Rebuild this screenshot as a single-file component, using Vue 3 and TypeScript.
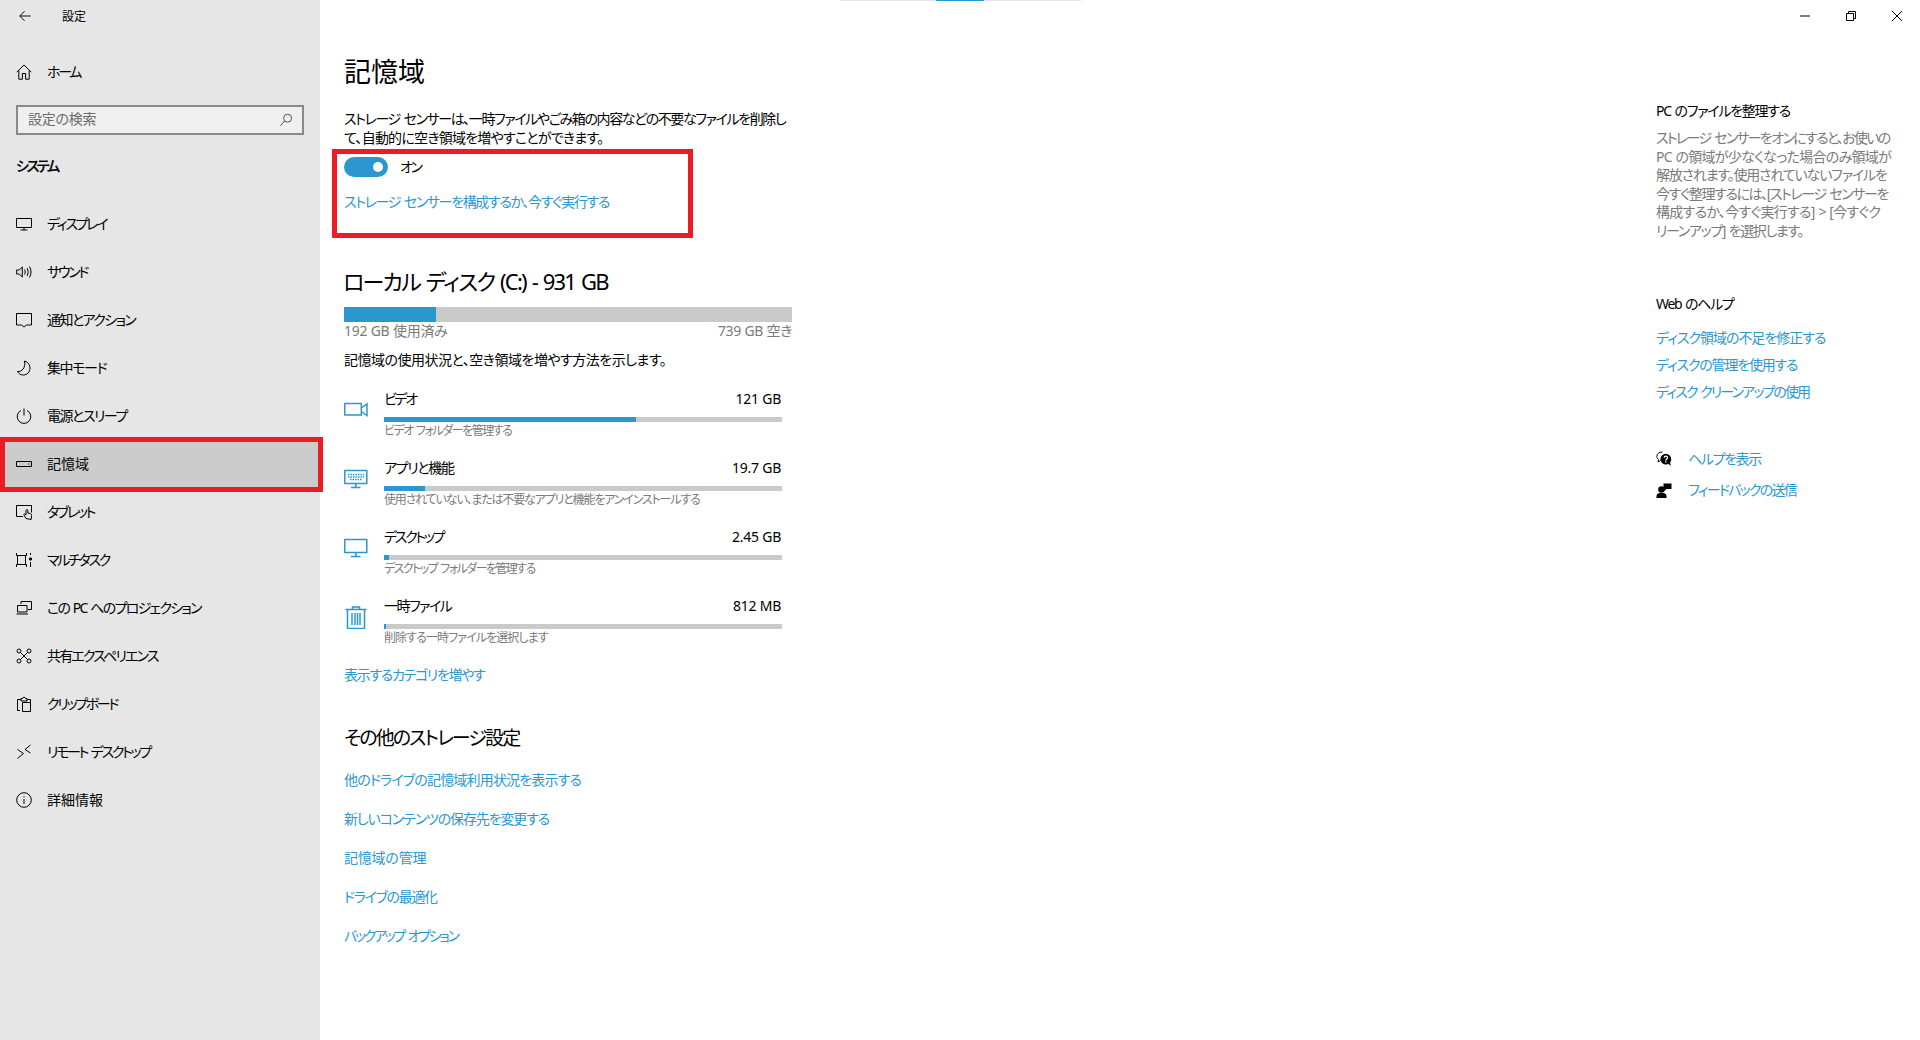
<template>
  <div class="window">
    <aside class="sidebar">
      <div class="titlebar">
        <svg class="back" viewBox="0 0 16 16"><path d="M14.5 8H2M7.5 2.5 2 8l5.5 5.5" /></svg>
        <span>設定</span>
      </div>
      <div class="nav-row home">
        <svg class="nav-icon" viewBox="0 0 16 16"><path d="M.8 8 8 1l7.2 7M2.8 6.5v8.7h3.6V9.5h3.2v5.7h3.6V6.5" /></svg>
        <span v-tight>ホーム</span>
      </div>
      <div class="search">
        <span v-tight>設定の検索</span>
        <svg viewBox="0 0 14 14"><circle cx="8.6" cy="5.2" r="4" /><path d="M5.8 8 1.2 12.8" /></svg>
      </div>
      <div class="group-title" v-tight>システム</div>
      <nav>
        <div v-for="item in navItems" :key="item.label" class="nav-row" :class="{ selected: item.label === '記憶域' }">
          <svg class="nav-icon" viewBox="0 0 16 16" v-html="item.icon"></svg>
          <span v-tight>{{ item.label }}</span>
        </div>
      </nav>
    </aside>

    <main class="content">
      <section class="storage">
        <h1>記憶域</h1>
        <p class="desc">
          <span v-for="line in descLines" :key="line" v-tight>{{ line }}</span>
        </p>

        <div class="sense-box">
          <div class="toggle-line">
            <span class="toggle"><i></i></span>
            <span v-tight>オン</span>
          </div>
          <a class="link sense-link" v-tight>ストレージ センサーを構成するか、今すぐ実行する</a>
        </div>

        <h2 v-tight>ローカル ディスク (C:) - 931 GB</h2>
        <div class="disk-bar"><div class="disk-fill"></div></div>
        <div class="disk-labels">
          <span v-tight>192 GB 使用済み</span>
          <span v-tight>739 GB 空き</span>
        </div>
        <p class="usage-note" v-tight>記憶域の使用状況と、空き領域を増やす方法を示します。</p>

        <div class="categories">
          <div v-for="c in categories" :key="c.name" class="category">
            <svg class="cat-icon" viewBox="0 0 24 24" v-html="c.icon"></svg>
            <div class="cat-body">
              <div class="cat-head">
                <span v-tight>{{ c.name }}</span>
                <span v-tight>{{ c.size }}</span>
              </div>
              <div class="cat-bar"><div class="cat-fill" :style="{ width: c.fill + 'px' }"></div></div>
              <div class="cat-sub" v-tight>{{ c.sub }}</div>
            </div>
          </div>
        </div>
        <a class="link more" v-tight>表示するカテゴリを増やす</a>

        <h3 v-tight>その他のストレージ設定</h3>
        <div class="other-links">
          <a v-for="l in otherLinks" :key="l" class="link" v-tight>{{ l }}</a>
        </div>
      </section>

      <aside class="help">
        <div class="help-title" v-tight>PC のファイルを整理する</div>
        <p class="help-text">
          <span v-for="line in helpLines" :key="line" v-tight>{{ line }}</span>
        </p>
        <div class="help-title web" v-tight>Web のヘルプ</div>
        <div class="help-links">
          <a class="link" v-tight>ディスク領域の不足を修正する</a>
          <a class="link" v-tight>ディスクの管理を使用する</a>
          <a class="link" v-tight>ディスク クリーンアップの使用</a>
        </div>
        <div class="help-actions">
          <div class="action">
            <svg viewBox="0 0 16 16">
              <path class="thin" d="M6.5 1C3.2 1 .8 3 .8 5.4c0 1.3.7 2.4 1.8 3.2L2 11l2.6-1.5" />
              <circle cx="9.8" cy="8.2" r="5.4" fill="#000" />
              <path class="solid" d="m12 12.5 2.8 2.5-.6-3.5z" />
              <path class="mark" d="M8.2 6.8c0-2.2 3.3-2.2 3.3-.1 0 1.3-1.7 1.3-1.7 2.7M9.8 10.3v1.100" />
            </svg>
            <a class="link" v-tight>ヘルプを表示</a>
          </div>
          <div class="action">
            <svg viewBox="0 0 16 16">
              <circle cx="5.5" cy="7.500" r="3.3" fill="#000" />
              <path class="solid" d="M.5 16v-1.800c0-2 1.700-3.200 3.500-3.200h3c1.800 0 3.500 1.200 3.500 3.200V16z" />
              <path class="solid" d="M7.500 1.500h8v5.500h-5L8.600 9V7h-1.100z" />
            </svg>
            <a class="link" v-tight>フィードバックの送信</a>
          </div>
        </div>
      </aside>
    </main>

    <div class="top-strip"><i></i></div>
    <div class="controls">
      <svg viewBox="0 0 10 10"><path d="M0 5h10" /></svg>
      <svg viewBox="0 0 10 10"><path d="M.5 2.500h7v7h-7zM2.500 2.500V.5h7v7H7.500" /></svg>
      <svg viewBox="0 0 10 10"><path d="m0 0 10 10M10 0 0 10" /></svg>
    </div>
  </div>
</template>

<script setup lang="ts">
import type { Directive } from 'vue'

// kana in the original UI font is narrower than in Noto, so pull each text in by its kana count
const vTight: Directive<HTMLElement> = {
  mounted(el) {
    const text = el.textContent || ''
    const scale = parseFloat(getComputedStyle(el).fontSize) / 14
    const kata = (text.match(/[\u30A0-\u30FF]/g) || []).length
    const hira = (text.match(/[\u3040-\u309F]/g) || []).length
    const latin = (text.match(/[A-Za-z0-9.]/g) || []).length
    const spaces = (text.match(/ /g) || []).length
    const cut = (kata * 2.3 + hira * 1.3 + latin * 0.3) * scale
    const each = cut / (text.length - spaces)
    el.style.letterSpacing = (-each).toFixed(3) + 'px'
    el.style.wordSpacing = each.toFixed(3) + 'px'
  },
}

const descLines = [
  'ストレージ センサーは、一時ファイルやごみ箱の内容などの不要なファイルを削除し',
  'て、自動的に空き領域を増やすことができます。',
]

const helpLines = [
  'ストレージ センサーをオンにすると、お使いの',
  'PC の領域が少なくなった場合のみ領域が',
  '解放されます。使用されていないファイルを',
  '今すぐ整理するには、[ストレージ センサーを',
  '構成するか、今すぐ実行する] > [今すぐク',
  'リーンアップ] を選択します。',
]

const navItems = [
  { label: 'ディスプレイ', icon: '<path d="M.5 2.500h15v9H.5zM8 11.500v2.500M4.500 14h7" />' },
  { label: 'サウンド', icon: '<path d="M.7 6h2.500L6.300 3v10L3.200 10H.7zM8.500 5.500c.9 1.600.9 3.400 0 5M11 4c1.500 2.500 1.500 5.500 0 8M13.500 2.500c2 3.500 2 7.500 0 11" />' },
  { label: '通知とアクション', icon: '<path d="M.5 1.500h15v11.500h-5L8 15l-2.500-2H.5z" />' },
  { label: '集中モード', icon: '<path d="M8.500 1c3.500 1 5.500 3.800 5.500 7 0 4-3 7-6.500 7C4.500 15 2.500 13.500 1.500 11.500c4 .5 8.500-3.500 7-10.500z" />' },
  { label: '電源とスリープ', icon: '<path d="M5 2.500a6.800 6.800 0 1 0 6 0M8 .5v7" />' },
  { label: '記憶域', icon: '<path d="M.5 5.500h15v5H.5zM12.500 8h1" />' },
  { label: 'タブレット', icon: '<path d="M7 12.500H.5v-11h15v7M10 14.500 8 11c-.5-1 .7-1.500 1.300-.8l.7.8V6.500c0-1.200 1.800-1.200 1.800 0V9l2.500.6c1 .2 1.300 1 1.200 2l-.3 3.900z" />' },
  { label: 'マルチタスク', icon: '<path d="M.5 1v2.500h10V1M.5 15v-2.500h10V15M1.500 3.500v9M9.500 3.500v9M14.500 1v2M14.500 10v5" /><circle cx="14.500" cy="7" r="1.200" fill="#000" />' },
  { label: 'この PC へのプロジェクション', icon: '<path d="M5 4V1.500h10.500v8H12M1.500 5.500H11v6.500H1.500zM.5 14h11.500" />' },
  { label: '共有エクスペリエンス', icon: '<circle cx="3" cy="3" r="2" /><circle cx="13" cy="3" r="2" /><circle cx="3" cy="13" r="2" /><circle cx="13" cy="13" r="2" /><path d="m4.500 4.500 7 7M11.500 4.500l-7 7" />' },
  { label: 'クリップボード', icon: '<path d="M4 14.500H1.500V3.500H5M11 3.500h3.500v2.500M5 5V2.500h1.500C6.500 .8 9.500 .8 9.500 2.500H11V5zM6.500 6.500h8v9h-8z" />' },
  { label: 'リモート デスクトップ', icon: '<path d="m1.500 5.500 6 4-6 5M14.500 1 9 5.500l5.500 3.500" />' },
  { label: '詳細情報', icon: '<circle cx="8" cy="8" r="7.300" /><path d="M8 7v5M8 4.200v1.200" />' },
]

const categories = [
  { name: 'ビデオ', size: '121 GB', sub: 'ビデオ フォルダーを管理する', fill: 252, icon: '<path d="M.8 5.500h16.500v11.500H.8zM17.300 10l5.700-4v11.500L17.300 13.500" />' },
  { name: 'アプリと機能', size: '19.7 GB', sub: '使用されていない、または不要なアプリと機能をアンインストールする', fill: 41, icon: '<path d="M.8 3.500h22v13H.8zM11.800 16.500v3.500M7 20.500h9.500" /><path stroke-dasharray="1.500 1" d="M4 7.500h16M4 10h16M6 12.500h12" />' },
  { name: 'デスクトップ', size: '2.45 GB', sub: 'デスクトップ フォルダーを管理する', fill: 5, icon: '<path d="M.8 3.500h22v13H.8zM11.800 16.500v3.500M7 20.500h9.500" />' },
  { name: '一時ファイル', size: '812 MB', sub: '削除する一時ファイルを選択します', fill: 2, icon: '<path d="M1.500 4.500h21M8.500 4.500V2h7v2.500M3.500 4.500v19h17v-19M8 8v12M11 8v12M13.500 8v12M16 8v12" />' },
]

const otherLinks = [
  '他のドライブの記憶域利用状況を表示する',
  '新しいコンテンツの保存先を変更する',
  '記憶域の管理',
  'ドライブの最適化',
  'バックアップ オプション',
]
</script>

<style>
html, body { margin: 0; background: #fff; }
</style>

<style scoped>
.window {
  position: relative; display: flex; height: 1040px; overflow: hidden; background: #fff; color: #000;
  font-family: "Noto Sans", "Noto Sans CJK JP", sans-serif; font-size: 14px; line-height: 20px;
  font-feature-settings: "palt";
}
.sidebar { flex: 0 0 320px; background: #e6e6e6; }
.titlebar { display: flex; align-items: center; height: 32px; margin-bottom: 16px; font-size: 12px; }
.titlebar span { padding-top: 2px; }
.titlebar .back { width: 14px; height: 14px; margin: 0 30px 0 18px; fill: none; stroke: #000; stroke-width: 1.1; }
.home { margin-bottom: 9px; }
.nav-row { position: relative; display: flex; align-items: center; height: 48px; padding-left: 16px; }
.nav-icon { flex: none; width: 16px; height: 16px; margin-right: 15px; fill: none; stroke: #000; stroke-width: 1; }
.search {
  display: flex; align-items: center; justify-content: space-between; box-sizing: border-box;
  width: 288px; height: 30px; margin-left: 16px; padding: 0 9px 0 10px;
  border: 2px solid #8a8a8a; background: #f0f0f0; color: #6b6b6b;
}
.search span { padding-bottom: 2px; }
.search svg { width: 14px; height: 14px; fill: none; stroke: #555; stroke-width: 1; }
.group-title { margin: 21px 0 24px 16px; font-weight: 500; -webkit-text-stroke: 0.2px #000; }
.selected { background: #cccccc; }
.selected::after {
  content: ""; position: absolute; left: 0; top: -3px; width: 323px; height: 55px;
  box-sizing: border-box; border: 5px solid #ed1c24;
}
.content { flex: 1; min-width: 0; display: flex; justify-content: space-between; padding-left: 24px; }
.storage { width: 448px; }
h1 { margin: 54px 0 0; font-size: 27px; line-height: 36px; font-weight: 400; }
.desc { margin: 19px 0 0; line-height: 19px; white-space: nowrap; }
.desc span, .help-text span { display: block; }
.sense-box {
  box-sizing: border-box; width: 361px; height: 89px; margin: 2px 0 0 -12px;
  padding: 3px 0 0 7px; border: 5px solid #ed1c24;
}
.toggle-line { display: flex; align-items: center; gap: 12px; height: 20px; }
.toggle { position: relative; display: block; width: 44px; height: 20px; border-radius: 10px; background: #2b97cf; }
.toggle i { position: absolute; right: 5px; top: 5px; width: 10px; height: 10px; border-radius: 50%; background: #fff; }
.link { display: block; color: #2b97cf; white-space: nowrap; }
.sense-link { margin-top: 15px; }
h2 { margin: 28px 0 0 -1px; font-size: 22px; line-height: 30px; font-weight: 400; }
.disk-bar { height: 15px; margin-top: 11px; background: #cacaca; }
.disk-fill { width: 92px; height: 100%; background: #2b97cf; }
.disk-labels { display: flex; justify-content: space-between; line-height: 18px; color: #7a7a7a; }
.usage-note { margin: 10px 0 0; }
.categories { display: flex; flex-direction: column; gap: 18px; margin-top: 19px; }
.category { display: flex; }
.cat-icon { flex: none; width: 24px; height: 24px; margin: 9px 16px 0 0; fill: none; stroke: #2b97cf; stroke-width: 1.5; }
.cat-body { width: 398px; }
.cat-head { display: flex; justify-content: space-between; padding-right: 1px; }
.cat-bar { height: 5px; margin-top: 8px; background: #cacaca; }
.cat-fill { height: 100%; background: #2b97cf; }
.cat-sub { font-size: 12px; line-height: 18px; color: #7a7a7a; white-space: nowrap; }
.more { margin-top: 18px; }
h3 { margin: 39px 0 0; font-size: 19px; line-height: 28px; font-weight: 400; }
.other-links { display: flex; flex-direction: column; gap: 19px; margin-top: 18px; }
.help { flex: 0 0 264px; min-width: 0; padding-top: 101px; }
.help-text { margin: 8px 0 0; line-height: 18.6px; color: #7a7a7a; white-space: nowrap; }
.web { margin-top: 53px; }
.help-links { display: flex; flex-direction: column; gap: 7px; margin-top: 14px; }
.help-actions { display: flex; flex-direction: column; gap: 11px; margin-top: 47px; }
.action { display: flex; align-items: center; gap: 16px; }
.action svg { flex: none; width: 16px; height: 16px; }
.thin { fill: none; stroke: #000; stroke-width: 1; }
.solid { fill: #000; }
.mark { fill: none; stroke: #fff; stroke-width: 1.3; }
.top-strip { position: absolute; left: 840px; top: 0; width: 241px; height: 1px; background: #e6e6e6; }
.top-strip i { position: absolute; left: 96px; top: 0; width: 48px; height: 1px; background: #2b97cf; }
.controls { position: absolute; right: 18px; top: 11px; display: flex; gap: 36px; }
.controls svg { width: 10px; height: 10px; fill: none; stroke: #000; stroke-width: 1; }
</style>
